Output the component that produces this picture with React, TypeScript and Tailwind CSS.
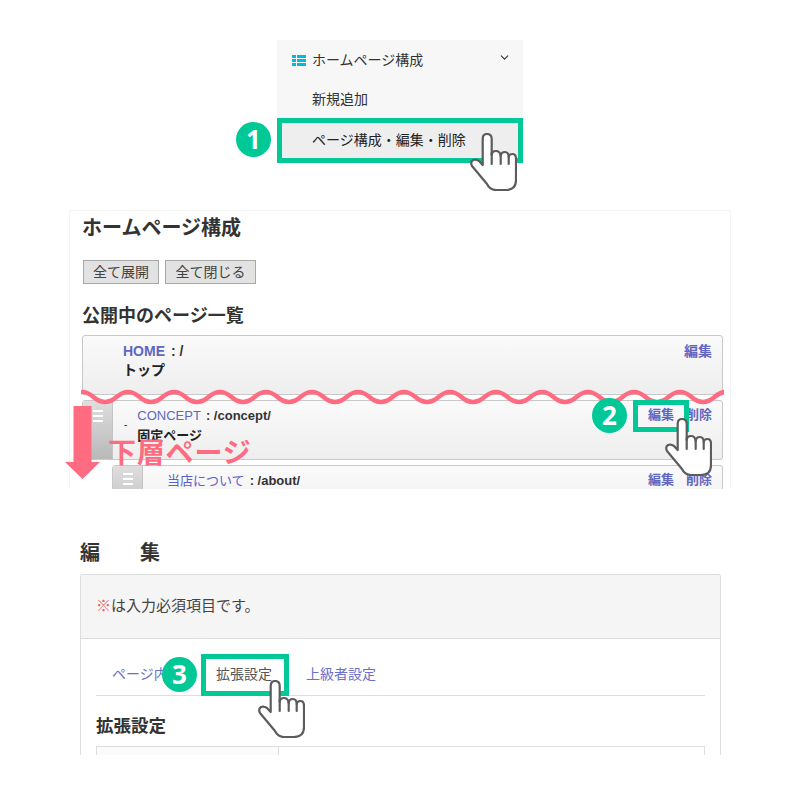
import { ChevronDown } from 'lucide-react';

const WAVE_PERIOD = 46;
const WAVE_START = -10.5;

const wavePath = () => {
    let d = `M${WAVE_START} 10`;
    for (let i = 0; i < 15; i++) {
        const x = WAVE_START + i * WAVE_PERIOD;
        d += ` Q${x + WAVE_PERIOD / 4} 0 ${x + WAVE_PERIOD / 2} 10 Q${x + (WAVE_PERIOD * 3) / 4} 20 ${x + WAVE_PERIOD} 10`;
    }
    return d;
};

const Hand = ({ className }: { className: string }) => (
    <svg viewBox="0 0 47 58" className={`absolute w-[47px] h-[58px] ${className}`} fill="white" stroke="#5c5c5c" strokeWidth="2.2" strokeLinejoin="round" strokeLinecap="round">
        <path d="M12.7 32V6Q12.7 1 17 1Q21.7 1 21.7 6V22Q22 18 26 18Q30 18 30.7 23Q31 19 35 19Q38.5 19 38.7 24Q39 21 42.5 21Q46 21 46 26V47Q46 57 36 57H26Q20 57 17 51L2 33Q0 29 3 27Q6 26 9 28Z" />
        <path d="M21.7 20V31M30.7 22V31M38.7 24V31" fill="none" />
    </svg>
);

const Badge = ({ n, className }: { n: number; className: string }) => (
    <div className={`absolute w-[35px] h-[35px] rounded-full bg-[#00c896] text-white flex items-center justify-center text-[26px] font-bold font-['Open_Sans',sans-serif] ${className}`}>
        {n}
    </div>
);

const Grip = ({ className }: { className: string }) => (
    <div className={`w-[30px] shrink-0 self-stretch bg-gradient-to-b from-[#dedede] to-[#b9b9b9] border-r border-[#c4c4c4] flex flex-col items-center gap-[3px] rounded-l-[3px] ${className}`}>
        <span className="w-[10px] h-[2px] bg-white" />
        <span className="w-[10px] h-[2px] bg-white" />
        <span className="w-[10px] h-[2px] bg-white" />
    </div>
);

const RowActions = ({ withDelete }: { withDelete: boolean }) => (
    <div className="ml-auto flex gap-[12px] font-bold text-[#6166c0] leading-[20px]">
        <span>編集</span>
        {withDelete && <span>削除</span>}
    </div>
);

export default function App() {
    return (
        <div className="relative w-[800px] h-[793px] bg-white overflow-hidden flex flex-col text-[#333] font-['Liberation_Sans','Noto_Sans_CJK_JP',sans-serif]">
            {/* menu */}
            <div className="mt-[40px] ml-[277px] w-[246px] bg-[#f7f7f7] text-[14px]">
                <div className="h-[40px] flex items-center pl-[15px] pr-[12px]">
                    <svg viewBox="0 0 14 11" className="w-[14px] h-[11px] mr-[6px]" fill="#05b9d8">
                        <rect x="0" y="0" width="4" height="3" />
                        <rect x="5" y="0" width="9" height="3" />
                        <rect x="0" y="4" width="4" height="3" />
                        <rect x="5" y="4" width="9" height="3" />
                        <rect x="0" y="8" width="4" height="3" />
                        <rect x="5" y="8" width="9" height="3" />
                    </svg>
                    <span>ホームページ構成</span>
                    <ChevronDown className="ml-auto mb-[6px] w-[13px] h-[13px]" strokeWidth={2} />
                </div>
                <div className="h-[38px] flex items-center pl-[35px]">新規追加</div>
                <div className="h-[45px] flex items-center pl-[30px] bg-[#eeeeee] border-[5px] border-[#00c896] text-[#222]">ページ構成・編集・削除</div>
            </div>

            {/* page list */}
            <div className="mt-[47px] ml-[69px] w-[662px] h-[279px] border border-[#f4f4f4] border-b-0 overflow-hidden pl-[12px] pr-[7px]">
                <h2 className="mt-[3px] text-[20px] leading-[28px] font-bold">ホームページ構成</h2>
                <div className="mt-[18px] ml-[1px] flex gap-[6px]">
                    <button className="h-[24px] w-[76px] bg-[#e2e2e2] border border-[#a8a8a8] text-[14px] text-[#444]">全て展開</button>
                    <button className="h-[24px] w-[91px] bg-[#e2e2e2] border border-[#a8a8a8] text-[14px] text-[#444]">全て閉じる</button>
                </div>
                <h3 className="mt-[19px] text-[18px] leading-[26px] font-bold">公開中のページ一覧</h3>
                <div className="mt-[6px] h-[60px] flex items-start pl-[40px] pr-[10px] pt-[5px] border border-[#c8c8c8] rounded-[3px] bg-gradient-to-b from-[#fafafa] to-[#eeeeee] text-[14px] leading-[20px]">
                    <div>
                        <div className="font-bold"><span className="text-[#6166c0] mr-[6px]">HOME</span>: /</div>
                        <div className="-mt-px font-bold text-[#222]">トップ</div>
                    </div>
                    <RowActions withDelete={false} />
                </div>
                <div className="mt-[5px] h-[60px] flex border border-[#c8c8c8] rounded-[3px] bg-gradient-to-b from-[#fafafa] to-[#eeeeee] text-[13px] leading-[20px]">
                    <Grip className="pt-[9px]" />
                    <span className="ml-[11px] mt-[14px] text-[10px] text-[#222]">-</span>
                    <div className="ml-[10px] pt-[5px]">
                        <div className="font-bold"><span className="font-normal text-[#6166c0] mr-[5px]">CONCEPT</span>: /concept/</div>
                        <div className="font-bold text-[#222]">固定ページ</div>
                    </div>
                    <div className="ml-auto pr-[10px] pt-[4px] flex">
                        <RowActions withDelete />
                    </div>
                </div>
                <div className="mt-[5px] ml-[30px] h-[60px] flex border border-[#c8c8c8] rounded-[3px] bg-gradient-to-b from-[#fafafa] to-[#eeeeee] text-[13px] leading-[20px]">
                    <Grip className="pt-[7px]" />
                    <div className="ml-[24px] pt-[5px] font-bold"><span className="font-normal text-[#5a62c8] mr-[5px]">当店について</span>: /about/</div>
                    <div className="ml-auto pr-[10px] pt-[4px] flex">
                        <RowActions withDelete />
                    </div>
                </div>
            </div>

            {/* edit form */}
            <h2 className="mt-[52px] ml-[80px] text-[20px] leading-[24px] font-bold whitespace-pre">編　　集</h2>
            <div className="mt-[9px] ml-[80px] w-[641px] h-[181px] border border-[#dddddd] border-b-0 rounded-t-[3px] overflow-hidden">
                <div className="h-[64px] bg-[#f5f5f5] border-b border-[#dddddd] flex items-center pl-[15px] text-[15px] text-[#444]">
                    <span className="text-[#d9695f]">※</span>は入力必須項目です。
                </div>
                <div className="mx-[15px] mt-[16px] h-[41px] flex border-b border-[#dddddd] text-[14px] text-[#6a6fc8]">
                    <div className="w-[104px] pl-[16px] pb-[2px] flex items-center whitespace-nowrap">ページ内容</div>
                    <div className="w-[90px] pl-[16px] pb-[2px] flex items-center text-[#555]">拡張設定</div>
                    <div className="pl-[16px] pb-[2px] flex items-center">上級者設定</div>
                </div>
                <h3 className="mx-[15px] mt-[18px] text-[17.5px] leading-[24px] font-bold">拡張設定</h3>
                <div className="mx-[15px] mt-[8px] flex h-[40px] border border-[#dddddd]">
                    <div className="w-[182px] border-r border-[#dddddd] bg-[#fbfbfb]" />
                </div>
            </div>

            {/* annotations */}
            <svg viewBox="0 0 643 20" className="absolute left-[81px] top-[387px] w-[643px] h-[20px]" fill="none" stroke="#ff6b81" strokeWidth="4.5">
                <path d={wavePath()} />
            </svg>
            <svg viewBox="0 0 35 73" className="absolute left-[65px] top-[406px] w-[35px] h-[73px]" fill="#ff6b81">
                <path d="M8.5 0H26.5V56H35L17.5 73L0 56H8.5Z" />
            </svg>
            <div className="absolute left-[108px] top-[435px] text-[28px] tracking-[0.8px] leading-[38px] font-bold text-[#ff6b81]">下層ページ</div>

            <Badge n={1} className="left-[236px] top-[122px]" />
            <Badge n={2} className="left-[592px] top-[398px]" />
            <Badge n={3} className="left-[162px] top-[657px]" />

            <div className="absolute left-[633px] top-[400px] w-[56px] h-[32px] border-[5px] border-[#00c896]" />
            <div className="absolute left-[201px] top-[654px] w-[88px] h-[42px] border-[5px] border-[#00c896]" />

            <Hand className="left-[470px] top-[133px]" />
            <Hand className="left-[665px] top-[418px]" />
            <Hand className="left-[258px] top-[680px]" />
        </div>
    );
}
